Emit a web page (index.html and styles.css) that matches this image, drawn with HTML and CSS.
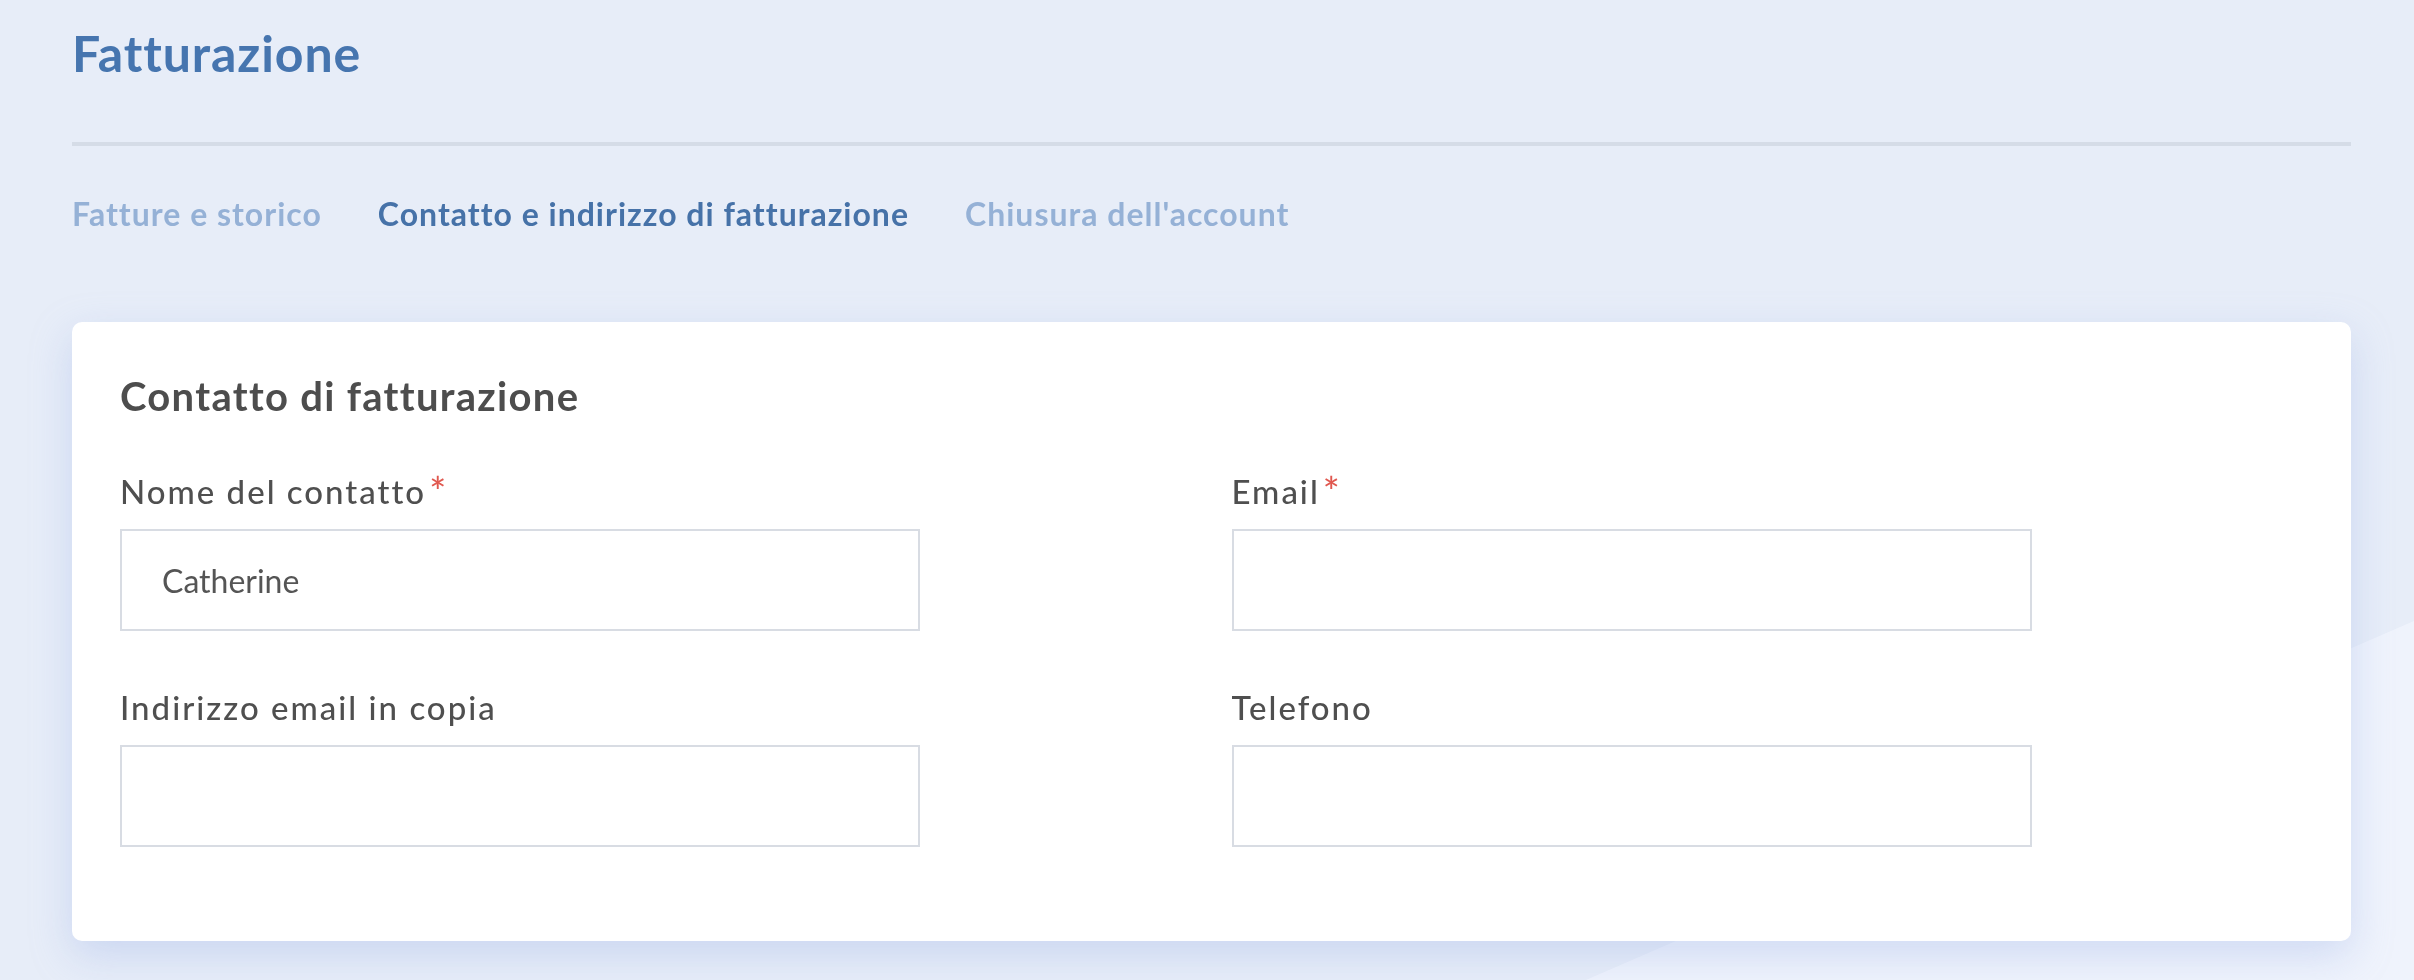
FILE: index.html
```html
<!DOCTYPE html>
<html lang="it">
<head>
<meta charset="utf-8">
<title>Fatturazione</title>
<link rel="stylesheet" href="styles.css">
</head>
<body>
<div class="page">
  <h1 class="title">Fatturazione</h1>
  <div class="divider"></div>
  <nav class="tabs">
    <a class="tab">Fatture e storico</a>
    <a class="tab active">Contatto e indirizzo di fatturazione</a>
    <a class="tab">Chiusura dell'account</a>
  </nav>
  <section class="card">
    <h2 class="card-title">Contatto di fatturazione</h2>
    <div class="form-grid">
      <div class="field">
        <label class="label">Nome del contatto<span class="req">*</span></label>
        <input class="input" type="text" value="Catherine">
      </div>
      <div class="field">
        <label class="label">Email<span class="req">*</span></label>
        <input class="input" type="text" value="">
      </div>
      <div class="field">
        <label class="label">Indirizzo email in copia</label>
        <input class="input" type="text" value="">
      </div>
      <div class="field">
        <label class="label">Telefono</label>
        <input class="input" type="text" value="">
      </div>
    </div>
  </section>
</div>
</body>
</html>
```
FILE: styles.css
```css
html, body {
  margin: 0;
  padding: 0;
}
body {
  background: #e7edf8;
  font-family: Lato, "Open Sans", sans-serif;
  min-height: 980px;
  position: relative;
  overflow: hidden;
}
body::before {
  content: "";
  position: fixed;
  inset: 0;
  background: #eff3fc;
  clip-path: polygon(2414px 621px, 2414px 980px, 1586px 980px);
  z-index: 0;
}
.page {
  position: relative;
  z-index: 1;
  margin-left: 72px;
  width: 2279px;
  padding-top: 28px;
}
.title {
  margin: 0;
  font-size: 50px;
  line-height: 50px;
  font-weight: 700;
  color: #4675af;
  letter-spacing: 0.9px;
}
.divider {
  margin-top: 64px;
  height: 4px;
  background: #d5dce7;
}
.tabs {
  margin-top: 52px;
  display: flex;
  gap: 56px;
  font-size: 32px;
  line-height: 32px;
  font-weight: 700;
  letter-spacing: 1px;
}
.tab {
  color: #95b1d6;
  cursor: pointer;
}
.tab.active {
  color: #4672a8;
}
.card {
  margin-top: 92px;
  background: #ffffff;
  border-radius: 10px;
  box-shadow: 0 14px 40px rgba(150, 172, 228, 0.35);
  padding: 54px 48px 94px;
}
.card-title {
  margin: 0;
  font-size: 40px;
  line-height: 40px;
  font-weight: 700;
  color: #4d4d4d;
  letter-spacing: 1.3px;
}
.form-grid {
  margin-top: 59px;
  display: grid;
  grid-template-columns: 1fr 1fr;
  column-gap: 40px;
  row-gap: 60px;
}
.field {
  display: flex;
  flex-direction: column;
  align-items: flex-start;
}
.label {
  font-size: 33px;
  line-height: 32px;
  color: #4f4f4f;
  font-weight: 500;
  letter-spacing: 2px;
}
.req {
  color: #e0584f;
  margin-left: 3px;
  font-size: 40px;
  line-height: 0;
  vertical-align: -2px;
}
.input {
  margin-top: 22px;
  box-sizing: border-box;
  width: 800px;
  height: 102px;
  border: 2px solid #d8dce3;
  border-radius: 0;
  background: #fff;
  padding: 0 40px;
  font-family: Lato, "Open Sans", sans-serif;
  font-size: 32px;
  color: #555555;
  outline: none;
}
```
